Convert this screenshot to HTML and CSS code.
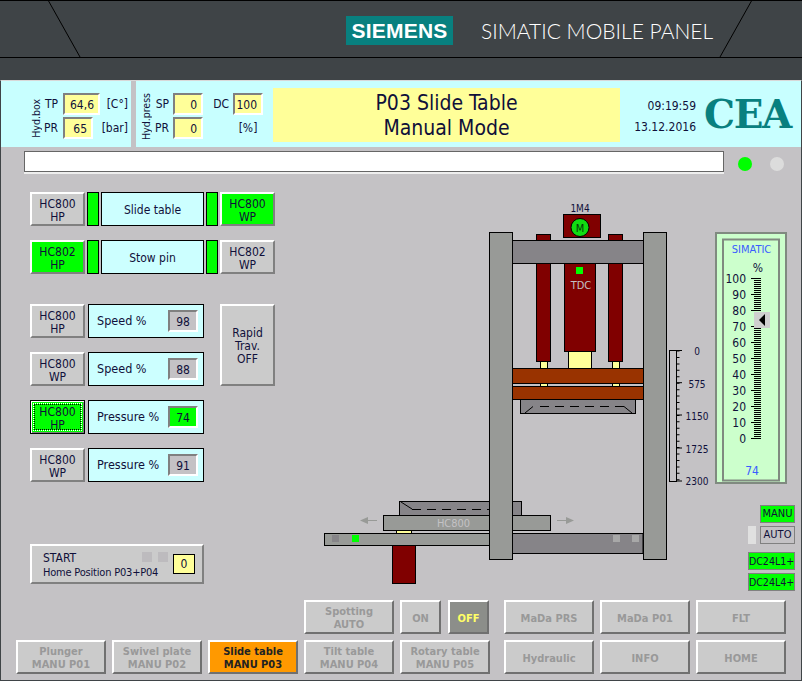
FILE: index.html
```html
<!DOCTYPE html>
<html lang="en">
<head>
<meta charset="utf-8">
<title>P03 Slide Table</title>
<link rel="stylesheet" href="styles.css">
</head>
<body>
<div class="screen">
  <header class="bezel">
    <svg class="bezel-lines" width="802" height="80" viewBox="0 0 802 80" aria-hidden="true">
      <path d="M0 .5H802M0 57.5H802M48 0L80 57M752 0L720 57" class="bezel-stroke"/>
    </svg>
    <div class="brand">SIEMENS</div>
    <div class="model">SIMATIC MOBILE PANEL</div>
  </header>
  <main class="panel">
    <section class="head">
      <div class="hyd hyd-box">
        <span class="rot">Hyd.box</span>
        <span class="lbl">TP</span><span class="val">64,6</span><span class="unit">[C°]</span>
        <span class="lbl">PR</span><span class="val val-short">65</span><span class="unit">[bar]</span>
      </div>
      <div class="hyd-press-wrap">
        <div class="hyd hyd-press">
          <span class="rot">Hyd.press</span>
          <span class="lbl">SP</span><span class="val">0</span><span class="lbl lbl-dc">DC</span><span class="val">100</span>
          <span class="lbl">PR</span><span class="val">0</span><span class="lbl-blank"></span><span class="pct">[%]</span>
        </div>
        <div class="title"><div>P03 Slide Table</div><div>Manual Mode</div></div>
        <div class="clock"><div>09:19:59</div><div>13.12.2016</div></div>
        <div class="logo">CEA</div>
      </div>
    </section>
    <section class="status">
      <div class="msg"></div>
      <span class="dot dot-on"></span>
      <span class="dot dot-off"></span>
    </section>
    <section class="work">
      <div class="left">
        <div class="valve-row">
          <div class="btn">HC800<br>HP</div><span class="ind"></span>
          <div class="name">Slide table</div><span class="ind"></span>
          <div class="btn btn-green">HC800<br>WP</div>
        </div>
        <div class="valve-row">
          <div class="btn btn-green">HC802<br>HP</div><span class="ind"></span>
          <div class="name">Stow pin</div><span class="ind"></span>
          <div class="btn">HC802<br>WP</div>
        </div>
        <div class="setpoints">
          <div class="btn">HC800<br>HP</div>
          <div class="setbox"><span>Speed %</span><span class="num">98</span></div>
          <div class="btn btn-rapid">Rapid<br>Trav.<br>OFF</div>
          <div class="btn">HC800<br>WP</div>
          <div class="setbox"><span>Speed %</span><span class="num">88</span></div>
          <div class="btn-focus"><div class="focus-in">HC800<br>HP</div></div>
          <div class="setbox"><span>Pressure %</span><span class="num num-green">74</span></div>
          <div class="empty"></div>
          <div class="btn">HC800<br>WP</div>
          <div class="setbox"><span>Pressure %</span><span class="num">91</span></div>
        </div>
        <div class="btn btn-start">
          <div class="start-text">START<br><span class="start-sub">Home Position P03+P04</span></div>
          <span class="sq sq-a"></span><span class="sq sq-b"></span>
          <span class="zero">0</span>
        </div>
      </div>

      <svg class="drawing" width="430" height="426" viewBox="285 174 430 426" role="img" aria-label="Press diagram">
        <rect class="red" x="536.5" y="234.5" width="14" height="127"/>
        <rect class="red" x="608.5" y="234.5" width="14" height="127"/>
        <rect class="yel" x="540.5" y="361.5" width="7" height="7"/>
        <rect class="yel" x="612.5" y="361.5" width="7" height="7"/>
        <rect class="yel" x="540.5" y="383.5" width="7" height="3"/>
        <rect class="yel" x="612.5" y="383.5" width="7" height="3"/>
        <rect class="yel" x="568.5" y="351.5" width="23" height="17"/>
        <rect class="red" x="564.5" y="263.5" width="31" height="88"/>
        <rect class="dk" x="512.5" y="240.5" width="131" height="23"/>
        <rect class="red" x="563.5" y="214.5" width="37" height="23"/>
        <circle class="motor" cx="580" cy="227.5" r="9"/>
        <text class="t11" x="580" y="232" text-anchor="middle">M</text>
        <text class="t10" x="580" y="212" text-anchor="middle">1M4</text>
        <rect class="grn" x="576" y="267" width="7" height="7"/>
        <text class="t-pale" x="581" y="289" text-anchor="middle">TDC</text>
        <rect class="brn" x="512.5" y="368.5" width="131" height="15"/>
        <rect class="brn" x="512.5" y="386.5" width="131" height="13"/>
        <rect class="dk" x="520.5" y="399.5" width="115" height="14"/>
        <path class="dash" d="M525 413L533 406.5"/>
        <path class="dash dashed" d="M540 406.5H619"/>
        <path class="dash" d="M619 406.5H624L632 413"/>
        <rect class="dk" x="399.5" y="501.5" width="122" height="14"/>
        <path class="dash" d="M401 502L412 509"/>
        <path class="dash dashed" d="M412 509.5H490"/>
        <rect class="gr" x="383.5" y="515.5" width="167" height="15"/>
        <text class="t-pale" x="453.5" y="527" text-anchor="middle">HC800</text>
        <rect class="yel" x="396.5" y="530.5" width="15" height="3"/>
        <rect class="dk" x="500" y="533.5" width="143" height="20"/>
        <rect class="gr" x="324.5" y="533.5" width="170" height="12"/>
        <rect class="red" x="392.5" y="545.5" width="23" height="38"/>
        <rect class="sq-dk" x="332" y="535" width="7" height="7"/>
        <rect class="grn" x="352" y="535" width="7" height="7"/>
        <rect class="sq-lt" x="613" y="535" width="7" height="7"/>
        <rect class="sq-lt" x="632" y="535" width="7" height="7"/>
        <path class="arrow-line" d="M367 520.5H377M557 520.5H567"/>
        <path class="arrow-head" d="M360 520.5L368 517V524ZM574 520.5L566 517V524Z"/>
        <rect class="gr" x="489.5" y="232.5" width="23" height="327"/>
        <rect class="gr" x="643.5" y="232.5" width="23" height="327"/>
        <rect class="scale" x="669.5" y="350.5" width="7" height="131"/>
        <path class="minor" d="M678 350.5V482"/>
        <path class="major" d="M676 350.5H682M676 382.7H682M676 415H682M676 448H682M676 481H682"/>
        <text class="t10" x="697" y="355" text-anchor="middle">0</text>
        <text class="t10" x="697" y="388" text-anchor="middle">575</text>
        <text class="t10" x="697" y="420" text-anchor="middle">1150</text>
        <text class="t10" x="697" y="453" text-anchor="middle">1725</text>
        <text class="t10" x="697" y="485" text-anchor="middle">2300</text>
      </svg>

      <div class="side">
        <svg class="gauge" width="72" height="252" viewBox="715 232 72 252" role="img" aria-label="Level gauge">
          <rect class="g-out" x="716" y="233" width="70" height="250"/>
          <rect class="g-in" x="723" y="239.5" width="56" height="241"/>
          <text class="g-blue" x="751.5" y="253" text-anchor="middle">SIMATIC</text>
          <text class="g-lab" x="758" y="272" text-anchor="middle">%</text>
          <text class="g-lab" x="746" y="283" text-anchor="end">100</text>
          <text class="g-lab" x="746" y="299" text-anchor="end">90</text>
          <text class="g-lab" x="746" y="315" text-anchor="end">80</text>
          <text class="g-lab" x="746" y="331" text-anchor="end">70</text>
          <text class="g-lab" x="746" y="347" text-anchor="end">60</text>
          <text class="g-lab" x="746" y="363" text-anchor="end">50</text>
          <text class="g-lab" x="746" y="379" text-anchor="end">40</text>
          <text class="g-lab" x="746" y="395" text-anchor="end">30</text>
          <text class="g-lab" x="746" y="411" text-anchor="end">20</text>
          <text class="g-lab" x="746" y="427" text-anchor="end">10</text>
          <text class="g-lab" x="746" y="443" text-anchor="end">0</text>
          <path class="g-minor" d="M757.5 278V439"/>
          <path class="g-major" d="M751 278.5H761M751 294.5H761M751 310.5H761M751 326.5H761M751 342.5H761M751 358.5H761M751 374.5H761M751 390.5H761M751 406.5H761M751 422.5H761M751 438.5H761"/>
          <rect class="g-ptr" x="754" y="312" width="16" height="16"/>
          <path class="g-tri" d="M759 320L765 314V326Z"/>
          <text class="g-val" x="752" y="475" text-anchor="middle">74</text>
        </svg>
        <div class="chips">
          <div class="chip-row"><span class="chip chip-green chip-s">MANU</span></div>
          <div class="chip-row"><span class="chip-pale"></span><span class="chip chip-s">AUTO</span></div>
          <div class="chip-row chip-gap"><span class="chip chip-green chip-w">DC24L1+</span></div>
          <div class="chip-row"><span class="chip chip-green chip-w">DC24L4+</span></div>
        </div>
      </div>
    </section>
    <nav class="nav">
      <div class="nav-left">
        <div class="nb nb-start">Spotting<br>AUTO</div>
        <div class="onoff"><div class="nb">ON</div><div class="nb nb-off">OFF</div></div>
        <div class="nb">Plunger<br>MANU P01</div>
        <div class="nb">Swivel plate<br>MANU P02</div>
        <div class="nb nb-active">Slide table<br>MANU P03</div>
        <div class="nb">Tilt table<br>MANU P04</div>
        <div class="nb">Rotary table<br>MANU P05</div>
      </div>
      <div class="nav-right">
        <div class="nb">MaDa PRS</div>
        <div class="nb">MaDa P01</div>
        <div class="nb">FLT</div>
        <div class="nb">Hydraulic</div>
        <div class="nb">INFO</div>
        <div class="nb">HOME</div>
      </div>
    </nav>
  </main>
</div>
</body>
</html>
```
FILE: styles.css
```css
* { box-sizing: border-box; }
html, body { margin: 0; padding: 0; }
body { background: #3f4447; font-family: "DejaVu Sans Condensed", "DejaVu Sans", sans-serif; font-stretch: condensed; font-size: 12px; color: #10103a; }
.screen { width: 802px; height: 681px; overflow: hidden; }

/* bezel */
.bezel { position: relative; height: 80px; background: #3f4447; display: flex; padding: 16px 0 0 346px; }
.bezel-lines { position: absolute; left: 0; top: 0; }
.bezel-stroke { fill: none; stroke: #000; stroke-width: 1; }
.brand { position: relative; width: 107px; height: 29px; background: #08807f; color: #fff; font: bold 21px/29px "Liberation Sans", sans-serif; text-align: center; letter-spacing: .2px; }
.model { position: relative; margin-left: 28px; color: #fff; font: 300 21px/29px "Lato", sans-serif; white-space: nowrap; }

/* panel */
.panel { height: 601px; background: #c4c2c5; border-left: 1px solid #3f4447; border-right: 1px solid #3f4447; border-top: 1px solid #d8d8d8; border-bottom: 1px solid #3f4447; display: flex; flex-direction: column; }

.head { display: flex; height: 66px; gap: 5px; }
.hyd-box { width: 130px; background: #c8ffff; padding: 12px 0 0 29px; grid-template-columns: 12px 21px 37px 28px; }
.hyd { display: grid; grid-auto-rows: 22px; row-gap: 2px; align-items: center; }
.hyd-press-wrap { flex: 1; background: #c8ffff; display: flex; }
.hyd-press { width: 127px; padding: 12px 0 0 5px; align-content: start; grid-template-columns: 11px 21px 30px 30px 30px; }
.rot { grid-row: 1 / 3; writing-mode: vertical-rl; transform: rotate(180deg); font-size: 10.5px; line-height: 11px; text-align: center; white-space: nowrap; justify-self: center; align-self: center; }
.hyd-box .rot { margin-top: 4px; }
.lbl { text-align: right; padding-right: 4px; line-height: 24px; }
.hyd-box .lbl { padding-right: 5px; }
.lbl-dc { padding-right: 4px; }
.val { height: 22px; background: #ffff99; border: 2px solid; border-color: #808080 #fff #fff #808080; text-align: right; padding-right: 4px; line-height: 20px; }
.val-short { width: 30px; }
.unit { text-align: right; line-height: 24px; }
.pct { text-align: center; line-height: 24px; }
.title { width: 347px; height: 54px; margin: 7px 0 0 10px; background: #ffff99; text-align: center; font-size: 21px; line-height: 25px; padding-top: 3px; }
.clock { width: 76px; text-align: right; font-size: 12px; line-height: 21px; padding-top: 15px; }
.logo { margin: 11px 0 0 8px; color: #08807f; font: bold 39px/44px "DejaVu Serif", serif; letter-spacing: -1.4px; }

.status { display: flex; align-items: center; height: 27px; padding: 4px 0 2px 23px; }
.msg { width: 700px; height: 21px; background: #fff; border: 1px solid #666; box-shadow: 0 2px 0 #eee; }
.dot { width: 14px; height: 14px; border-radius: 50%; margin-top: 4px; }
.dot-on { background: #00ff00; margin-left: 14px; }
.dot-off { background: #dcdcdc; margin-left: 18px; }

.work { flex: 1; display: flex; min-height: 0; }
.left { width: 284px; padding: 18px 0 0 29px; flex: none; }
.drawing { flex: none; display: block; }
.side { width: 85px; flex: none; padding-top: 58px; }

.btn { width: 55px; height: 34px; background: #cbcbcb; border: 2px solid; border-color: #fff #808080 #808080 #fff; text-align: center; line-height: 13px; padding-top: 4px; flex: none; }
.btn-green { background: #00ff00; }
.valve-row { display: flex; gap: 2px; margin-bottom: 14px; }
.ind { width: 12px; height: 34px; background: #00ff00; border: 1px solid #000; }
.name { width: 103px; height: 34px; background: #ccffff; border: 1px solid #000; text-align: center; line-height: 35px; }
.setpoints { display: grid; grid-template-columns: 55px 116px 55px; column-gap: 3px; row-gap: 14px; margin-top: 30px; grid-auto-rows: 34px; }
.setpoints .btn-rapid { grid-column: 3; grid-row: 1 / 3; height: 82px; margin-left: 13px; padding-top: 21px; }
.setbox { background: #ccffff; border: 1px solid #000; display: flex; align-items: center; justify-content: space-between; padding: 0 5px 0 8px; line-height: 20px; font-size: 12.5px; }
.num { width: 30px; height: 22px; border: 2px solid; border-color: #808080 #fff #fff #808080; background: #c4c2c5; text-align: center; line-height: 20px; font-size: 12px; }
.num-green { background: #00ff00; }
.btn-focus { width: 55px; height: 34px; border: 1px solid #000; background: #00ff00; box-shadow: inset 1px 1px 0 #fff, inset -1px -1px 0 #808080; padding: 3px; }
.focus-in { height: 26px; border: 1px dotted #000; outline: 1px dotted #fff; text-align: center; line-height: 13px; padding-top: 1px; white-space: nowrap; }
.empty { height: 34px; }
.btn-start { position: relative; width: 174px; height: 40px; margin-top: 62px; text-align: left; padding: 5px 0 0 11px; }
.start-text { line-height: 14px; white-space: nowrap; }
.start-sub { font-size: 11px; letter-spacing: -.2px; }
.sq { position: absolute; top: 6px; width: 10px; height: 10px; background: #bdbbbe; }
.sq-a { left: 110px; }
.sq-b { left: 126px; }
.zero { position: absolute; left: 141px; top: 8px; width: 22px; height: 20px; background: #ffff99; border: 1px solid #000; text-align: center; line-height: 19px; }

/* drawing */
.red { fill: #800000; stroke: #000; }
.yel { fill: #ffff99; stroke: #000; }
.dk { fill: #868488; stroke: #000; }
.gr { fill: #989a97; stroke: #000; }
.brn { fill: #993300; stroke: #000; }
.grn { fill: #00ff00; }
.motor { fill: #11dd11; stroke: #000; }
.sq-dk { fill: #868488; }
.sq-lt { fill: #a8a8a8; }
.dash { fill: none; stroke: #000; stroke-width: 1; }
.dashed { stroke-dasharray: 9 6; }
.arrow-line { stroke: #989a97; fill: none; }
.arrow-head { fill: #989a97; }
.scale { fill: #c4c2c5; stroke: #000; }
.minor { stroke: #000; stroke-width: 3; stroke-dasharray: 1 5.44; fill: none; }
.major { stroke: #000; fill: none; }
.t10 { font: 10px "DejaVu Sans Condensed", "DejaVu Sans", sans-serif; font-stretch: condensed; fill: #10103a; }
.t11 { font: 11px "DejaVu Sans Condensed", "DejaVu Sans", sans-serif; fill: #053a05; }
.t-pale { font: 11px "DejaVu Sans Condensed", "DejaVu Sans", sans-serif; fill: #c4c2c5; }

/* gauge */
.gauge { display: block; }
.g-out { fill: #ccffcc; stroke: #808a80; stroke-width: 2; }
.g-in { fill: #ccffcc; stroke: #808a80; stroke-width: 2; }
.g-blue { font: 11px "DejaVu Sans Condensed", "DejaVu Sans", sans-serif; fill: #3a5cff; }
.g-lab { font: 12px "DejaVu Sans Condensed", "DejaVu Sans", sans-serif; fill: #10103a; }
.g-val { font: 12px "DejaVu Sans Condensed", "DejaVu Sans", sans-serif; fill: #3a5cff; }
.g-minor { stroke: #000; stroke-width: 7; stroke-dasharray: 1 1; fill: none; }
.g-major { stroke: #000; fill: none; }
.g-ptr { fill: #cfcfcf; }
.g-tri { fill: #000; }

/* chips */
.chips { margin-top: 21px; padding-right: 5px; display: flex; flex-direction: column; gap: 3px; }
.chip-row { display: flex; justify-content: flex-end; gap: 4px; }
.chip { height: 18px; border: 1px solid #808080; background: #c4c2c5; font-size: 11px; line-height: 16px; text-align: center; white-space: nowrap; }
.chip-green { background: #00ff00; }
.chip-s { width: 35px; }
.chip-w { width: 47px; font-size: 10.5px; }
.chip-pale { width: 8px; height: 18px; background: #e0e0e0; }
.chip-gap { margin-top: 5px; }

/* bottom nav */
.nav { display: flex; padding: 0 0 0 15px; gap: 14px; height: 80px; flex: none; }
.nav-left { display: grid; grid-template-columns: repeat(5, 90px); column-gap: 6px; row-gap: 6px; grid-auto-rows: 34px; }
.nav-right { display: grid; grid-template-columns: repeat(3, 90px); column-gap: 6px; row-gap: 6px; grid-auto-rows: 34px; }
.nb { background: #cbcbcb; border: 2px solid; border-color: #fff #707070 #707070 #fff; color: #999; font-weight: 700; font-size: 11px; line-height: 13px; text-align: center; display: flex; align-items: center; justify-content: center; white-space: nowrap; padding-top: 2px; }
.nb-start { grid-column: 4; }
.onoff { display: flex; gap: 7px; }
.onoff .nb { width: 41px; }
.nb-off { background: #8c8e8a; color: #ffff66; }
.nb-active { background: #ff9900; color: #222; }
```
